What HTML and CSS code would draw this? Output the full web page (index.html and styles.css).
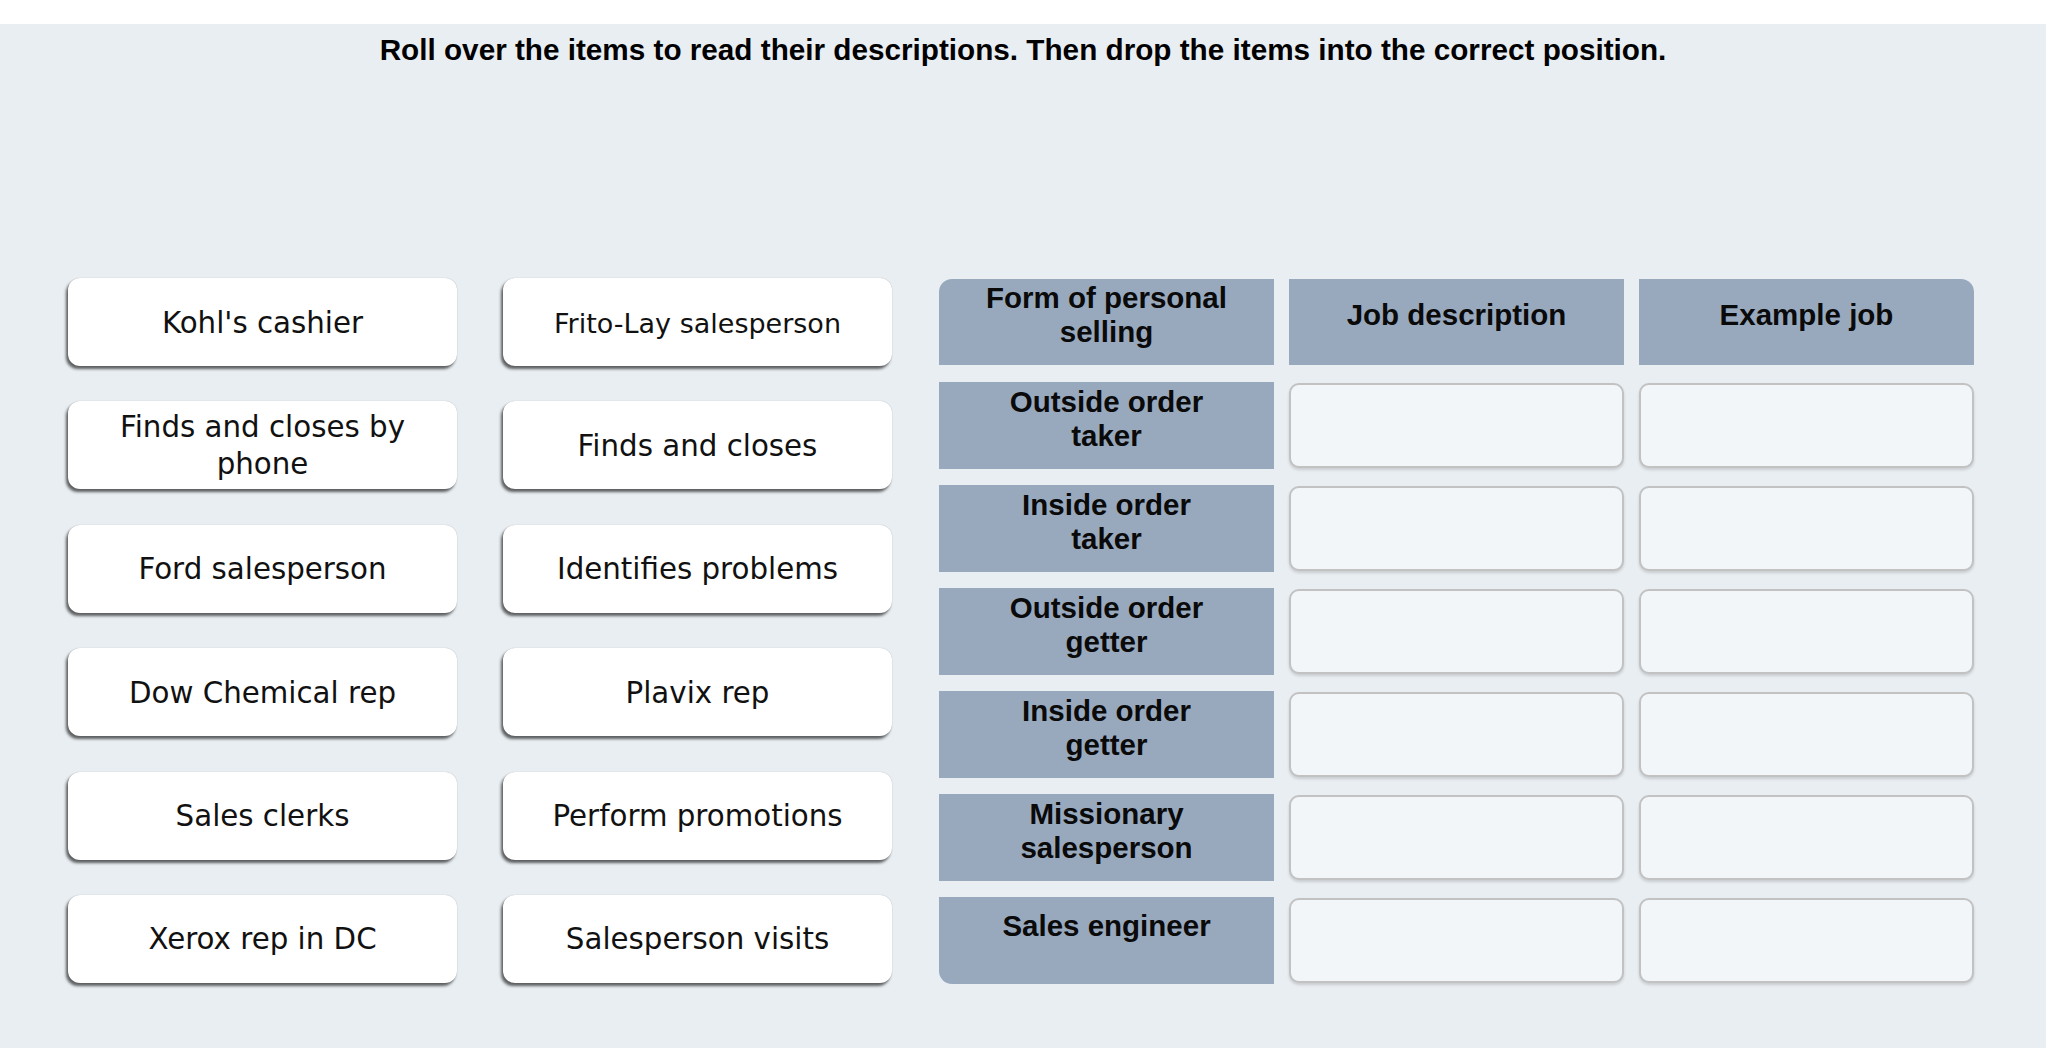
FILE: index.html
```html
<!DOCTYPE html>
<html lang="en">
<head>
<meta charset="utf-8">
<title>Personal selling drag and drop</title>
<link rel="stylesheet" href="styles.css">
</head>
<body>
<div class="topbar"></div>
<main class="stage">
  <h1 class="prompt">Roll over the items to read their descriptions. Then drop the items into the correct position.</h1>
  <div class="workspace">
    <div class="bank">
      <div class="card">Kohl's cashier</div>
      <div class="card card-small">Frito-Lay salesperson</div>
      <div class="card">Finds and closes by phone</div>
      <div class="card">Finds and closes</div>
      <div class="card">Ford salesperson</div>
      <div class="card">Identifies problems</div>
      <div class="card">Dow Chemical rep</div>
      <div class="card">Plavix rep</div>
      <div class="card">Sales clerks</div>
      <div class="card">Perform promotions</div>
      <div class="card">Xerox rep in DC</div>
      <div class="card">Salesperson visits</div>
    </div>
    <div class="board">
      <div class="cell head corner-tl">Form of personal selling</div>
      <div class="cell head">Job description</div>
      <div class="cell head corner-tr">Example job</div>

      <div class="cell label">Outside order<br>taker</div>
      <div class="drop"></div>
      <div class="drop"></div>

      <div class="cell label">Inside order<br>taker</div>
      <div class="drop"></div>
      <div class="drop"></div>

      <div class="cell label">Outside order<br>getter</div>
      <div class="drop"></div>
      <div class="drop"></div>

      <div class="cell label">Inside order<br>getter</div>
      <div class="drop"></div>
      <div class="drop"></div>

      <div class="cell label">Missionary<br>salesperson</div>
      <div class="drop"></div>
      <div class="drop"></div>

      <div class="cell label label-high corner-bl">Sales engineer</div>
      <div class="drop"></div>
      <div class="drop"></div>
    </div>
  </div>
</main>
</body>
</html>
```
FILE: styles.css
```css
html, body {
  margin: 0;
  padding: 0;
  background: #ffffff;
}

body {
  font-family: "Liberation Sans", Arial, sans-serif;
  color: #000;
}

.topbar {
  height: 24px;
  background: #ffffff;
}

.stage {
  background: #e9eef2;
  min-height: 1024px;
  padding-top: 9px;
  box-sizing: border-box;
}

.prompt {
  margin: 0;
  font-family: "Liberation Sans", Arial, sans-serif;
  font-weight: bold;
  font-size: 29.7px;
  line-height: 34px;
  text-align: center;
}

.workspace {
  display: flex;
  align-items: flex-start;
  padding-left: 68px;
  margin-top: 211px;
}

.bank {
  display: grid;
  grid-template-columns: repeat(2, 389px);
  grid-auto-rows: 88px;
  column-gap: 46px;
  row-gap: 35.4px;
}

.card {
  display: flex;
  align-items: center;
  justify-content: center;
  text-align: center;
  background: #ffffff;
  border-radius: 12px;
  box-shadow: -2px 3px 3px rgba(0, 0, 0, 0.6), 0 0 1px rgba(0, 0, 0, 0.3);
  font-family: "DejaVu Sans", Verdana, sans-serif;
  font-size: 29.3px;
  line-height: 37px;
  padding: 2px 12px 0;
  color: #111;
}

.card-small {
  font-size: 27px;
}

.board {
  display: grid;
  grid-template-columns: repeat(3, 335px);
  grid-template-rows: 87px repeat(6, 87px);
  column-gap: 15px;
  row-gap: 16px;
  margin-left: 47px;
  margin-top: 1px;
}

.board .head {
  margin-bottom: 1px;
}

.cell {
  display: flex;
  align-items: center;
  justify-content: center;
  text-align: center;
  background: #98a9be;
  font-family: "Liberation Sans", Arial, sans-serif;
  font-weight: bold;
  font-size: 29.5px;
  line-height: 34px;
  padding: 0 12px 14px;
  box-sizing: border-box;
  color: #0a0a0a;
}

.label-high {
  padding-bottom: 30px;
}

.corner-tl { border-top-left-radius: 13px; }
.corner-tr { border-top-right-radius: 13px; }
.corner-bl { border-bottom-left-radius: 13px; }

.drop {
  margin: 1px 0;
  background: #f3f6f9;
  border: 2px solid #c2c2c2;
  border-radius: 10px;
  box-shadow: 0 2px 3px rgba(0, 0, 0, 0.14);
}
```
